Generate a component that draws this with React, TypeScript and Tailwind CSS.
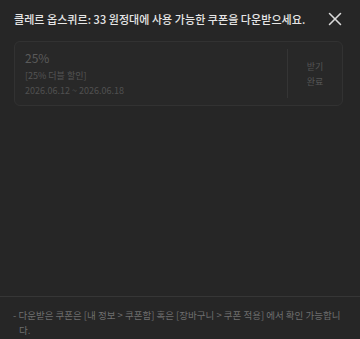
import { X } from "lucide-react"

const coupon = {
  rate: "25%",
  name: "[25% 더블 할인]",
  period: "2026.06.12 ~ 2026.06.18",
}

export default function App() {
  return (
    <div
      className="flex h-[339px] w-[360px] flex-col bg-[#262626]"
      style={{ fontFamily: '"Noto Sans CJK KR", "Noto Sans", sans-serif' }}
    >
      {/* Header */}
      <div className="flex items-center justify-between pl-[14px] pr-[14px] pt-[8px] pb-[8px]">
        <h2 className="text-[11px] font-medium leading-[22px] tracking-[0.05px] text-[#e6e6e6]">
          클레르 옵스퀴르: 33 원정대에 사용 가능한 쿠폰을 다운받으세요.
        </h2>
        <X className="h-[22px] w-[22px] text-[#d9d9d9]" strokeWidth={1.7} />
      </div>

      {/* Coupon card */}
      <div className="pl-[14px] pr-[17px] pt-[3px]">
        <div className="flex h-[65px] rounded-[6px] border border-[#323232] bg-[#282828]">
          <div className="flex flex-1 flex-col justify-center pl-[10px]">
            <p className="text-[12px] leading-[16px] text-[#5a5a5a]">{coupon.rate}</p>
            <p className="mt-[3px] text-[9px] leading-[14px] text-[#555]">{coupon.name}</p>
            <p className="mt-[1px] text-[9px] leading-[14px] text-[#505050]">{coupon.period}</p>
          </div>
          <div className="my-[7px] w-px bg-[#353535]"></div>
          <div className="flex w-[54px] flex-col items-center justify-center text-[9px] leading-[15px] text-[#555]">
            <span>받기</span>
            <span>완료</span>
          </div>
        </div>
      </div>

      <div className="flex-1"></div>

      {/* Notice */}
      <div className="border-t border-[#363636] pl-[13px] pr-[14px] pt-[11px] pb-[1px]">
        <p className="pl-[6px] -indent-[6px] text-[9.5px] leading-[15px] text-[#6f6f6f]">
          - 다운받은 쿠폰은 [내 정보 &gt; 쿠폰함] 혹은 [장바구니 &gt; 쿠폰 적용] 에서 확인 가능합니다.
        </p>
      </div>
    </div>
  )
}
